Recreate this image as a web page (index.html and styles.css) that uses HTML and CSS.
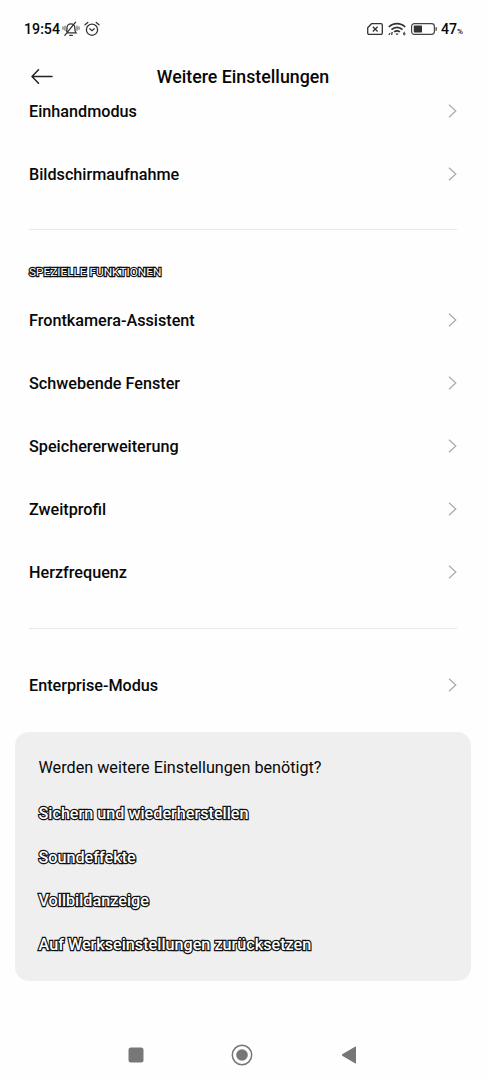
FILE: index.html
```html
<!DOCTYPE html>
<html lang="de">

<head>
    <meta charset="UTF-8" />
    <meta name="viewport" content="width=device-width, initial-scale=1.0" />
    <title>Weitere Einstellungen</title>
    <link rel="stylesheet" href="styles.css">
</head>

<body>
    <div class="statusbar">
        <div class="status-left">
            <span class="time">19:54</span>
            <svg class="icon-mute" width="18" height="16" viewBox="0 0 18 16" fill="none" stroke="#333" stroke-width="1.3" stroke-linecap="round">
                <path d="M5.500 11.800H14c-1-1.200-1.200-2-1.200-5a3.900 3.900 0 0 0-7.800 0c0 1.500 0 2.500-.4 3.500M7.800 14.300h2.600M2.800 14.300 13.600 1.200" />
                <path d="M1 6v2.200M3 5.200v4M15 5.200v4M17 6v2.200" stroke="#777" />
            </svg>
            <svg class="icon-alarm" width="16" height="16" viewBox="0 0 16 16" fill="none" stroke="#333" stroke-width="1.3" stroke-linecap="round">
                <circle cx="8" cy="8.700" r="5.600" />
                <path d="M5.800 7.800 8 9.700l2.300-1.900M1 3.800 3.800 1.500M15 3.800l-2.800-2.300" />
            </svg>
        </div>
        <div class="status-right">
            <svg width="16" height="12" viewBox="0 0 16 12" fill="none" stroke="#333" stroke-width="1.3" stroke-linejoin="round">
                <path d="M4.500.7H14a1.300 1.300 0 0 1 1.300 1.300v8a1.300 1.300 0 0 1-1.300 1.300H2A1.300 1.300 0 0 1 .7 10V4.800z" />
                <path d="m5.800 3.700 4.800 4.800M10.600 3.700 5.800 8.500" />
            </svg>
            <svg class="icon-wifi" width="18" height="14" viewBox="0 0 18 14" fill="none" stroke="#333" stroke-width="1.700">
                <path d="M.8 5a11.600 11.600 0 0 1 16.400 0M3.500 7.600a7.800 7.800 0 0 1 11 0M6.100 10a4.100 4.100 0 0 1 5.800 0" />
                <path d="M7.300 11.400h3.400L9 13.200z" fill="#333" stroke="none" />
                <path d="M.8 12.800 2.200 11M3.800 13v-2.200h1.200" stroke-width="1.100" />
                <circle cx="16.300" cy="12" r=".9" stroke-width="1" />
                <path d="M15.600 11.600 16.600 9.800" stroke-width="1" />
            </svg>
            <svg class="icon-battery" width="27" height="12" viewBox="0 0 27 12">
                <rect x=".6" y=".6" width="22.800" height="10.800" rx="2.800" fill="none" stroke="#444" stroke-width="1.200" />
                <rect x="2.800" y="2.600" width="8.200" height="6.800" rx=".6" fill="#333" />
                <path d="M25.200 4.300v3.400" stroke="#444" stroke-width="1.300" />
            </svg>
            <span class="percent">47<small>%</small></span>
        </div>
    </div>

    <header class="header">
        <svg class="back" width="22" height="16" viewBox="0 0 22 16" fill="none" stroke="#222" stroke-width="1.500" stroke-linecap="round" stroke-linejoin="round">
            <path d="M21 7.500H1M7.500.8 1 7.500l6.500 6.700" />
        </svg>
        <h1>Weitere Einstellungen</h1>
    </header>

    <main class="content">
        <ul class="list list-first">
            <li>Einhandmodus<svg class="chevron" viewBox="0 0 9 14"><path d="M1 .8 7.800 7 1 13.200" /></svg></li>
            <li>Bildschirmaufnahme<svg class="chevron" viewBox="0 0 9 14"><path d="M1 .8 7.800 7 1 13.200" /></svg></li>
        </ul>
        <hr>
        <h2 class="outlined">SPEZIELLE FUNKTIONEN</h2>
        <ul class="list">
            <li>Frontkamera-Assistent<svg class="chevron" viewBox="0 0 9 14"><path d="M1 .8 7.800 7 1 13.200" /></svg></li>
            <li>Schwebende Fenster<svg class="chevron" viewBox="0 0 9 14"><path d="M1 .8 7.800 7 1 13.200" /></svg></li>
            <li>Speichererweiterung<svg class="chevron" viewBox="0 0 9 14"><path d="M1 .8 7.800 7 1 13.200" /></svg></li>
            <li>Zweitprofil<svg class="chevron" viewBox="0 0 9 14"><path d="M1 .8 7.800 7 1 13.200" /></svg></li>
            <li>Herzfrequenz<svg class="chevron" viewBox="0 0 9 14"><path d="M1 .8 7.800 7 1 13.200" /></svg></li>
        </ul>
        <hr>
        <ul class="list list-last">
            <li>Enterprise-Modus<svg class="chevron" viewBox="0 0 9 14"><path d="M1 .8 7.800 7 1 13.200" /></svg></li>
        </ul>

        <section class="more">
            <p>Werden weitere Einstellungen benötigt?</p>
            <a class="outlined">Sichern und wiederherstellen</a>
            <a class="outlined">Soundeffekte</a>
            <a class="outlined">Vollbildanzeige</a>
            <a class="outlined">Auf Werkseinstellungen zurücksetzen</a>
        </section>
    </main>

    <nav class="navbar">
        <svg width="16" height="16" viewBox="0 0 16 16" fill="#777"><rect x=".5" y=".5" width="15" height="15" rx="2.500" /></svg>
        <svg width="22" height="22" viewBox="0 0 22 22" fill="#777">
            <circle cx="11" cy="11" r="9.700" fill="none" stroke="#777" stroke-width="1.500" />
            <circle cx="11" cy="11" r="5.800" />
        </svg>
        <svg width="16" height="18" viewBox="0 0 16 18" fill="#777"><path d="M14 .7 1.200 8.300q-.9.700 0 1.400L14 17.300q1 .4 1-.6V1.300q0-1-1-.6z" /></svg>
    </nav>
</body>

</html>
```
FILE: styles.css
```css
* {
    box-sizing: border-box;
    margin: 0;
    padding: 0;
}

body {
    font-family: Roboto, sans-serif;
    background: #fefefe;
    color: #080808;
    height: 1080px;
    display: flex;
    flex-direction: column;
}

.statusbar {
    display: flex;
    justify-content: space-between;
    align-items: center;
    height: 50px;
    padding: 8px 23px 0 24px;
    font-size: 14.2px;
    font-weight: 500;
}

.status-left,
.status-right {
    display: flex;
    align-items: center;
}

.icon-mute {
    margin-left: 2px;
}

.icon-alarm {
    margin-left: 4px;
}

.icon-wifi {
    margin-left: 5px;
}

.icon-battery {
    margin-left: 5px;
}

.percent {
    margin-left: 3px;
}

.percent small {
    font-size: 8px;
}

.header {
    display: grid;
    grid-template-columns: 60px 1fr 60px;
    align-items: center;
    height: 53px;
}

.back {
    margin-left: 31px;
}

h1 {
    font-size: 17.8px;
    font-weight: 500;
    text-align: center;
}

.content {
    flex: 1;
}

.list {
    list-style: none;
    padding: 0 29px;
}

.list-first {
    margin: -23px 0 -1px;
}

.list-last {
    padding-top: 1px;
}

.list li {
    display: flex;
    justify-content: space-between;
    align-items: center;
    height: 63px;
    font-size: 16.2px;
    font-weight: 500;
}

.chevron {
    width: 9px;
    height: 14px;
    margin: 0 .5px 1px 0;
    fill: none;
    stroke: #aaa;
    stroke-width: 1.2;
}

.list-first .chevron {
    margin-bottom: 2px;
}

hr {
    height: 1px;
    margin: 24px 29px;
    border: none;
    background: #e8e8e8;
}

.outlined {
    color: #fff;
    -webkit-text-stroke: 2.4px #111;
    paint-order: stroke fill;
}

h2 {
    height: 35px;
    padding: 0 29px;
    font-size: 11.8px;
    font-weight: 400;
    line-height: 36px;
}

.more {
    display: flex;
    flex-direction: column;
    height: 249px;
    margin: 15px 15px 0;
    padding: 14px 23.5px;
    border-radius: 14px;
    background: #efefef;
    font-size: 16.2px;
}

.more p {
    height: 46px;
    line-height: 44px;
}

.more a {
    height: 43.7px;
    line-height: 43.7px;
    font-weight: 500;
}

.navbar {
    display: flex;
    justify-content: space-between;
    align-items: center;
    height: 50px;
    padding: 0 129.5px 0 128px;
}
```
